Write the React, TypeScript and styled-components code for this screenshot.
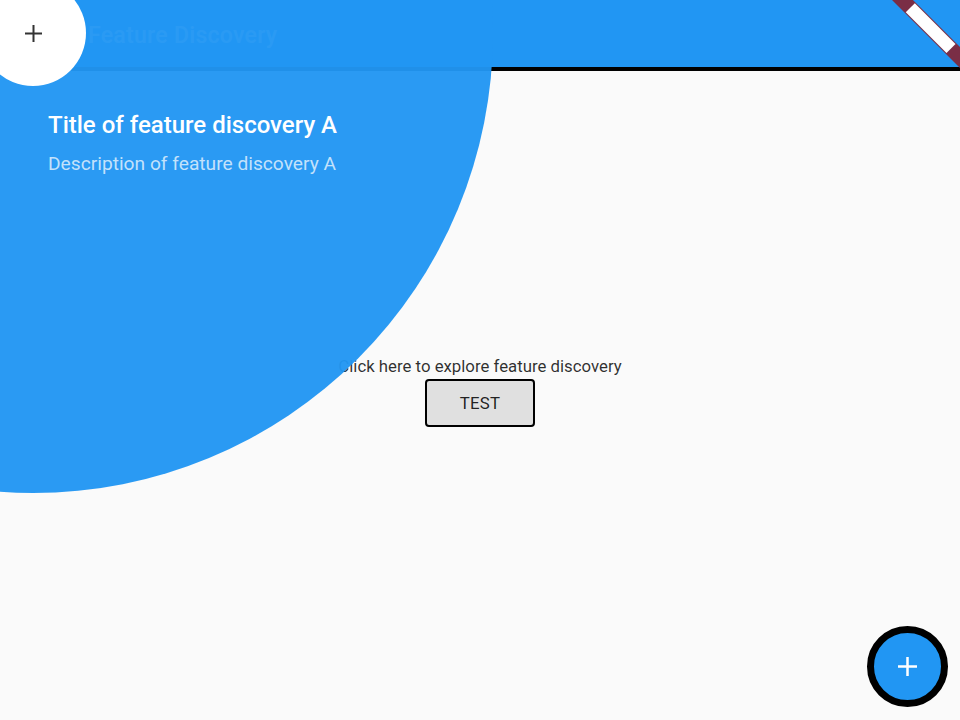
import React from "react";
import styled, { createGlobalStyle } from "styled-components";

const GlobalStyle = createGlobalStyle`
  html, body {
    margin: 0;
    padding: 0;
    background: #fafafa;
    font-family: Roboto, "Noto Sans", sans-serif;
  }
`;

const Page = styled.div`
  position: relative;
  width: 960px;
  height: 720px;
  overflow: hidden;
  background: #fafafa;
  display: flex;
  flex-direction: column;
`;

const AppBar = styled.header`
  height: 67px;
  flex: none;
  box-sizing: border-box;
  background: #2196f3;
  border-bottom: 4px solid #000;
  display: flex;
  align-items: center;
  padding: 3px 0 0 88px;
  height: 71px;
`;

const AppTitle = styled.h1`
  margin: 0;
  font-size: 23px;
  font-weight: 500;
  letter-spacing: 0.3px;
  color: #fff;
`;

const Body = styled.main`
  flex: 1;
  display: flex;
  flex-direction: column;
  align-items: center;
  justify-content: center;
  gap: 3px;
  padding-bottom: 9px;
`;

const Hint = styled.p`
  margin: 0;
  font-size: 16.8px;
  line-height: 20px;
  color: rgba(0, 0, 0, 0.82);
`;

const TestButton = styled.button`
  width: 110px;
  height: 48px;
  background: #e0e0e0;
  border: 2px solid #000;
  border-radius: 4px;
  font-family: Roboto, sans-serif;
  font-size: 16.8px;
  color: rgba(0, 0, 0, 0.87);
  letter-spacing: 0.3px;
`;

const Fab = styled.button`
  position: absolute;
  right: 12px;
  bottom: 13px;
  width: 81px;
  height: 81px;
  box-sizing: border-box;
  border-radius: 50%;
  border: 7px solid #000;
  background: #2196f3;
  display: flex;
  align-items: center;
  justify-content: center;
  padding: 0;
`;

const Overlay = styled.div`
  position: absolute;
  inset: 0;
  pointer-events: none;
`;

const Halo = styled.div<{ $cx: number; $cy: number; $r: number; $bg: string }>`
  position: absolute;
  left: ${(p) => p.$cx - p.$r}px;
  top: ${(p) => p.$cy - p.$r}px;
  width: ${(p) => p.$r * 2}px;
  height: ${(p) => p.$r * 2}px;
  border-radius: 50%;
  background: ${(p) => p.$bg};
  display: flex;
  align-items: center;
  justify-content: center;
`;

const Callout = styled.div`
  position: absolute;
  left: 48px;
  top: 110px;
  display: flex;
  flex-direction: column;
  gap: 12px;
`;

const CalloutTitle = styled.div`
  font-size: 24px;
  line-height: 30px;
  font-weight: 500;
  color: #fff;
`;

const CalloutText = styled.div`
  font-size: 19.2px;
  line-height: 24px;
  color: rgba(255, 255, 255, 0.72);
`;

const Banner = styled.svg`
  position: absolute;
  top: 0;
  right: 0;
`;

const Plus = ({ size, stroke, color }: { size: number; stroke: number; color: string }) => (
  <svg width={size} height={size} viewBox={`0 0 ${size} ${size}`}>
    <path
      d={`M${size / 2} 0V${size}M0 ${size / 2}H${size}`}
      stroke={color}
      strokeWidth={stroke}
    />
  </svg>
);

export default function App() {
  return (
    <>
      <GlobalStyle />
      <Page>
        <AppBar>
          <AppTitle>Feature Discovery</AppTitle>
        </AppBar>
        <Body>
          <Hint>Click here to explore feature discovery</Hint>
          <TestButton>TEST</TestButton>
        </Body>
        <Fab>
          <Plus size={19} stroke={2.5} color="#fff" />
        </Fab>
        <Overlay>
          <Halo $cx={33} $cy={33} $r={460} $bg="rgba(33, 150, 243, 0.96)" />
          <Callout>
            <CalloutTitle>Title of feature discovery A</CalloutTitle>
            <CalloutText>Description of feature discovery A</CalloutText>
          </Callout>
          <Halo $cx={33} $cy={33} $r={53} $bg="#fff">
            <Plus size={17} stroke={2} color="#333" />
          </Halo>
        </Overlay>
        <Banner width="70" height="72" viewBox="0 0 70 72">
          <g transform="translate(12.5 0) rotate(45)">
            <rect x="-20" y="-7.4" width="130" height="14.8" fill="#7a2e46" />
            <rect x="11" y="-6.4" width="57.6" height="12.8" fill="#fff" />
          </g>
        </Banner>
      </Page>
    </>
  );
}
